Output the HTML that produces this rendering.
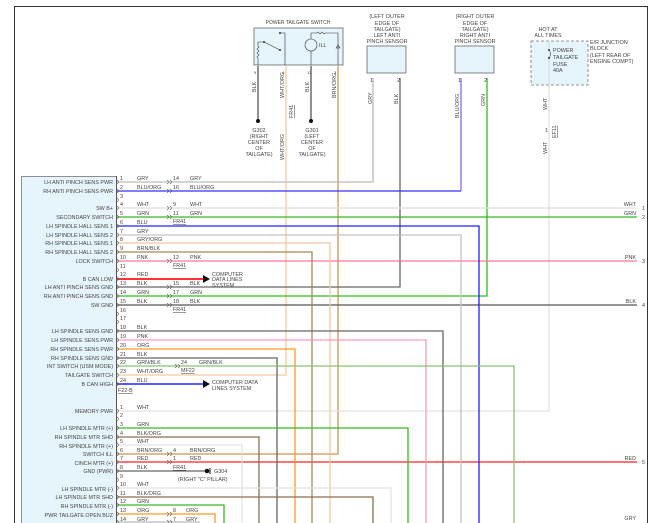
<!DOCTYPE html>
<html><head><meta charset="utf-8"><style>
html,body{margin:0;padding:0;background:#fff;width:650px;height:523px;overflow:hidden}
svg{display:block}
text{font-family:"Liberation Sans",sans-serif;font-size:5.4px;fill:#444}
.r{text-anchor:end}
.m{text-anchor:middle}
.u{text-decoration:underline}
</style></head><body>
<svg width="650" height="523" viewBox="0 0 650 523" xmlns="http://www.w3.org/2000/svg">
<!-- frame -->
<path d="M14.5 523V6.5H647.5V523" fill="none" stroke="#333" stroke-width="1"/>

<!-- vertical long wires -->
<g fill="none" stroke-width="1.3">
<!-- top switch wires -->
<path d="M258 66V120" stroke="#555"/>
<path d="M311 66V120" stroke="#555"/>
<path d="M286 66V375H117" stroke="#f2c9a0"/>
<path d="M338 66V454H117" stroke="#c89850"/>
<!-- sensors -->
<path d="M373 78V182H117" stroke="#bbb"/>
<path d="M400 78V287H117" stroke="#666"/>
<path d="M461 78V191" stroke="#8866ee"/>
<path d="M461 191H117" stroke="#3333ff"/>
<path d="M487 78V296H117" stroke="#33bb22"/>
<path d="M549 85V411H117" stroke="#e2e2e2"/>
<!-- right outputs -->
<path d="M117 208H637" stroke="#ddd"/>
<path d="M117 217H637" stroke="#33bb22"/>
<path d="M117 261H637" stroke="#ff7799"/>
<path d="M117 305H637" stroke="#555"/>
<path d="M117 462H637" stroke="#ff2222"/>
<!-- down to bottom -->
<path d="M117 226H479V523" stroke="#2222ff"/>
<path d="M117 235H461V523" stroke="#c4c4c4"/>
<path d="M117 243H330V523" stroke="#f0c8a0"/>
<path d="M117 252H312V523" stroke="#a08c58"/>
<path d="M117 331H443V523" stroke="#666"/>
<path d="M117 340H426V523" stroke="#ff99bb"/>
<path d="M117 349H295V523" stroke="#ff9922"/>
<path d="M117 358H277V523" stroke="#666"/>
<path d="M117 366H514V523" stroke="#88c070"/>
<path d="M117 428H408V523" stroke="#33bb22"/>
<path d="M117 437H259V523" stroke="#8b6f4e"/>
<path d="M117 445H242V523" stroke="#e2e2e2"/>
<path d="M117 488H391V523" stroke="#e2e2e2"/>
<path d="M117 497H373V523" stroke="#8b6f4e"/>
<path d="M117 505H224V523" stroke="#33bb22"/>
<path d="M117 514H215V523" stroke="#ff9922"/>
<path d="M117 522H200" stroke="#bbb"/>
<!-- arrows / ground -->
<path d="M117 279H205" stroke="#ff3333" stroke-width="2"/>
<path d="M117 384H205" stroke="#2222ff" stroke-width="1.5"/>
<path d="M117 471H205" stroke="#666"/>
</g>
<path d="M203 275L210 279L203 283Z" fill="#111"/>
<path d="M203 380L210 384L203 388Z" fill="#111"/>
<circle cx="207" cy="471" r="2.3" fill="#111"/><path d="M210 468V474" stroke="#111"/>

<!-- module box -->
<rect x="21.5" y="176.5" width="95" height="350" fill="#e6f4fb" stroke="#777" stroke-width="0.8"/>
<line x1="116.5" y1="176" x2="116.5" y2="523" stroke="#555" stroke-width="1"/>

<!-- C1 labels -->
<g>
<text class="r" x="113" y="184">LH ANTI PINCH SENS PWR</text><text x="120" y="180">1</text><text x="137" y="180">GRY</text>
<text class="r" x="113" y="193">RH ANTI PINCH SENS PWR</text><text x="120" y="189">2</text><text x="137" y="189">BLU/ORG</text>
<text x="120" y="198">3</text>
<text class="r" x="113" y="210">SW B+</text><text x="120" y="206">4</text><text x="137" y="206">WHT</text>
<text class="r" x="113" y="219">SECONDARY SWITCH</text><text x="120" y="215">5</text><text x="137" y="215">GRN</text>
<text class="r" x="113" y="228">LH SPINDLE HALL SENS 1</text><text x="120" y="224">6</text><text x="137" y="224">BLU</text>
<text class="r" x="113" y="237">LH SPINDLE HALL SENS 2</text><text x="120" y="233">7</text><text x="137" y="233">GRY</text>
<text class="r" x="113" y="245">RH SPINDLE HALL SENS 1</text><text x="120" y="241">8</text><text x="137" y="241">GRY/ORG</text>
<text class="r" x="113" y="254">RH SPINDLE HALL SENS 2</text><text x="120" y="250">9</text><text x="137" y="250">BRN/BLK</text>
<text class="r" x="113" y="263">LOCK SWITCH</text><text x="120" y="259">10</text><text x="137" y="259">PNK</text>
<text x="120" y="268">11</text>
<text class="r" x="113" y="281">B CAN LOW</text><text x="120" y="276">12</text><text x="137" y="276">RED</text>
<text class="r" x="113" y="289">LH ANTI PINCH SENS GND</text><text x="120" y="285">13</text><text x="137" y="285">BLK</text>
<text class="r" x="113" y="298">RH ANTI PINCH SENS GND</text><text x="120" y="294">14</text><text x="137" y="294">GRN</text>
<text class="r" x="113" y="307">SW GND</text><text x="120" y="303">15</text><text x="137" y="303">BLK</text>
<text x="120" y="312">16</text><text x="120" y="320">17</text>
<text class="r" x="113" y="333">LH SPINDLE SENS GND</text><text x="120" y="329">18</text><text x="137" y="329">BLK</text>
<text class="r" x="113" y="342">LH SPINDLE SENS PWR</text><text x="120" y="338">19</text><text x="137" y="338">PNK</text>
<text class="r" x="113" y="351">RH SPINDLE SENS PWR</text><text x="120" y="347">20</text><text x="137" y="347">ORG</text>
<text class="r" x="113" y="360">RH SPINDLE SENS GND</text><text x="120" y="356">21</text><text x="137" y="356">BLK</text>
<text class="r" x="113" y="368">INT SWITCH (USM MODE)</text><text x="120" y="364">22</text><text x="137" y="364">GRN/BLK</text>
<text class="r" x="113" y="377">TAILGATE SWITCH</text><text x="120" y="373">23</text><text x="137" y="373">WHT/ORG</text>
<text class="r" x="113" y="386">B CAN HIGH</text><text x="120" y="382">24</text><text x="137" y="382">BLU</text>
<text class="u" x="118" y="392">F22-B</text>
<!-- inline connectors -->
<text x="173" y="180">14</text><text x="190" y="180">GRY</text>
<text x="173" y="189">16</text><text x="190" y="189">BLU/ORG</text>
<text x="173" y="206">9</text><text x="190" y="206">WHT</text>
<text x="173" y="215">11</text><text x="190" y="215">GRN</text><text class="u" x="173" y="223">FR41</text>
<text x="173" y="259">12</text><text x="190" y="259">PNK</text><text class="u" x="173" y="267">FR41</text>
<text x="173" y="285">15</text><text x="190" y="285">BLK</text>
<text x="173" y="294">17</text><text x="190" y="294">GRN</text>
<text x="173" y="303">18</text><text x="190" y="303">BLK</text><text class="u" x="173" y="311">FR41</text>
<text x="181" y="364">24</text><text x="199" y="364">GRN/BLK</text><text class="u" x="181" y="372">MF22</text>
<text x="212" y="276">COMPUTER</text><text x="212" y="281">DATA LINES</text><text x="212" y="287">SYSTEM</text>
<text x="212" y="384">COMPUTER DATA</text><text x="212" y="390">LINES SYSTEM</text>
<!-- C2 -->
<text class="r" x="113" y="413">MEMORY PWR</text><text x="120" y="409">1</text><text x="137" y="409">WHT</text>
<text x="120" y="417">2</text>
<text class="r" x="113" y="430">LH SPINDLE MTR (+)</text><text x="120" y="426">3</text><text x="137" y="426">GRN</text>
<text class="r" x="113" y="439">RH SPINDLE MTR SHD</text><text x="120" y="435">4</text><text x="137" y="435">BLK/ORG</text>
<text class="r" x="113" y="448">RH SPINDLE MTR (+)</text><text x="120" y="443">5</text><text x="137" y="443">WHT</text>
<text class="r" x="113" y="456">SWITCH ILL</text><text x="120" y="452">6</text><text x="137" y="452">BRN/ORG</text>
<text class="r" x="113" y="465">CINCH MTR (+)</text><text x="120" y="460">7</text><text x="137" y="460">RED</text>
<text class="r" x="113" y="473">GND (PWR)</text><text x="120" y="469">8</text><text x="137" y="469">BLK</text>
<text x="120" y="478">9</text>
<text class="r" x="113" y="491">LH SPINDLE MTR (-)</text><text x="120" y="486">10</text><text x="137" y="486">WHT</text>
<text class="r" x="113" y="499">LH SPINDLE MTR SHD</text><text x="120" y="495">11</text><text x="137" y="495">BLK/ORG</text>
<text class="r" x="113" y="508">RH SPINDLE MTR (-)</text><text x="120" y="503">12</text><text x="137" y="503">GRN</text>
<text class="r" x="113" y="517">PWR TAILGATE OPEN BUZ</text><text x="120" y="512">13</text><text x="137" y="512">ORG</text>
<text x="120" y="521">14</text><text x="137" y="521">GRY</text>
<text x="173" y="452">4</text><text x="190" y="452">BRN/ORG</text>
<text x="173" y="460">1</text><text x="190" y="460">RED</text><text class="u" x="173" y="469">FR41</text>
<text x="173" y="512">8</text><text x="186" y="512">ORG</text>
<text x="173" y="521">7</text><text x="186" y="521">GRY</text>
<text x="214" y="473">G304</text><text x="178" y="481">(RIGHT "C" PILLAR)</text>
<!-- right labels -->
<text class="r" x="636" y="206">WHT</text><text x="642" y="210">1</text>
<text class="r" x="636" y="215">GRN</text><text x="642" y="219">2</text>
<text class="r" x="636" y="259">PNK</text><text x="642" y="263">3</text>
<text class="r" x="636" y="303">BLK</text><text x="642" y="307">4</text>
<text class="r" x="636" y="460">RED</text><text x="642" y="464">5</text>
<text class="r" x="636" y="520">GRY</text>
</g>
<!-- connector glyphs -->
<g fill="none" stroke="#555" stroke-width="0.6">
<path d="M117 180q3 2 0 4M117 189q3 2 0 4M117 198q3 2 0 4M117 206q3 2 0 4M117 215q3 2 0 4M117 224q3 2 0 4M117 233q3 2 0 4M117 241q3 2 0 4M117 250q3 2 0 4M117 259q3 2 0 4M117 268q3 2 0 4M117 277q3 2 0 4M117 285q3 2 0 4M117 294q3 2 0 4M117 303q3 2 0 4M117 312q3 2 0 4M117 320q3 2 0 4M117 329q3 2 0 4M117 338q3 2 0 4M117 347q3 2 0 4M117 356q3 2 0 4M117 364q3 2 0 4M117 373q3 2 0 4M117 382q3 2 0 4M117 409q3 2 0 4M117 417q3 2 0 4M117 426q3 2 0 4M117 435q3 2 0 4M117 443q3 2 0 4M117 452q3 2 0 4M117 460q3 2 0 4M117 469q3 2 0 4M117 478q3 2 0 4M117 486q3 2 0 4M117 495q3 2 0 4M117 503q3 2 0 4M117 512q3 2 0 4M117 520q3 2 0 4"/>
<path d="M167 180q3 2 0 4m3 -4q3 2 0 4M167 189q3 2 0 4m3 -4q3 2 0 4M167 206q3 2 0 4m3 -4q3 2 0 4M167 215q3 2 0 4m3 -4q3 2 0 4M167 259q3 2 0 4m3 -4q3 2 0 4M167 285q3 2 0 4m3 -4q3 2 0 4M167 294q3 2 0 4m3 -4q3 2 0 4M167 303q3 2 0 4m3 -4q3 2 0 4M175 364q3 2 0 4m3 -4q3 2 0 4M167 452q3 2 0 4m3 -4q3 2 0 4M167 460q3 2 0 4m3 -4q3 2 0 4M167 512q3 2 0 4m3 -4q3 2 0 4M167 520q3 2 0 4m3 -4q3 2 0 4"/>
</g>

<!-- power tailgate switch -->
<text class="m" x="298" y="24" style="font-size:5px">POWER TAILGATE SWITCH</text>
<rect x="254" y="28" width="89" height="37" fill="#e6f4fb" stroke="#666" stroke-width="0.8"/>
<g fill="none" stroke="#333" stroke-width="0.6">
<path d="M258 65V58q-2-1 0-2q2-1 0-2q-2-1 0-2q2-1 0-2q-2-1 0-2q2-1 0-2V42l6 0"/>
<path d="M264 42l16 8"/><path d="M280 33h5V65"/>
<circle cx="311" cy="45" r="6"/><path d="M311 33h6q1-2 2 0q1 2 2 0q1-2 2 0q1 2 2 0h13V65M311 33V39M311 51V65"/>
<path d="M336 48l2-3 2 3z"/>
</g>
<circle cx="264" cy="42" r="1" fill="#333"/><circle cx="280" cy="50" r="1" fill="#333"/><circle cx="280" cy="33" r="1" fill="#333"/>
<text x="319" y="47">ILL</text>
<text x="254" y="74" style="font-size:4px">9</text><text x="282" y="74" style="font-size:4px">4</text><text x="307" y="74" style="font-size:4px">12</text><text x="334" y="74" style="font-size:4px">3</text>
<g style="font-size:4.5px">
<text transform="translate(256,92) rotate(-90)">BLK</text>
<text transform="translate(284,98) rotate(-90)">WHT/ORG</text>
<text transform="translate(309,92) rotate(-90)">BLK</text>
<text transform="translate(336,98) rotate(-90)">BRN/ORG</text>
<text class="u" transform="translate(293,118) rotate(-90)">FR41</text>
<text transform="translate(284,160) rotate(-90)">WHT/ORG</text>
</g>
<circle cx="258" cy="121" r="2" fill="#111"/><circle cx="311" cy="121" r="2" fill="#111"/>
<text class="m" x="259" y="132">G302</text><text class="m" x="259" y="138">(RIGHT</text><text class="m" x="259" y="144">CENTER</text><text class="m" x="259" y="150">OF</text><text class="m" x="259" y="156">TAILGATE)</text>
<text class="m" x="312" y="132">G301</text><text class="m" x="312" y="138">(LEFT</text><text class="m" x="312" y="144">CENTER</text><text class="m" x="312" y="150">OF</text><text class="m" x="312" y="156">TAILGATE)</text>

<!-- sensors -->
<text class="m" x="387" y="18">(LEFT OUTER</text><text class="m" x="387" y="25">EDGE OF</text><text class="m" x="387" y="31">TAILGATE)</text><text class="m" x="387" y="37">LEFT ANTI</text><text class="m" x="387" y="43">PINCH SENSOR</text>
<rect x="367" y="46" width="39" height="27" fill="#e6f4fb" stroke="#666" stroke-width="0.8"/>
<text class="m" x="475" y="18">(RIGHT OUTER</text><text class="m" x="475" y="25">EDGE OF</text><text class="m" x="475" y="31">TAILGATE)</text><text class="m" x="475" y="37">RIGHT ANTI</text><text class="m" x="475" y="43">PINCH SENSOR</text>
<rect x="455" y="46" width="39" height="27" fill="#e6f4fb" stroke="#666" stroke-width="0.8"/>
<g style="font-size:4.5px">
<text x="370" y="82">1</text><text x="397" y="82">2</text><text x="458" y="82">1</text><text x="484" y="82">2</text>
<text transform="translate(372,104) rotate(-90)">GRY</text>
<text transform="translate(398,104) rotate(-90)">BLK</text>
<text transform="translate(459,118) rotate(-90)">BLU/ORG</text>
<text transform="translate(485,106) rotate(-90)">GRN</text>
<text transform="translate(547,110) rotate(-90)">WHT</text>
<text transform="translate(547,154) rotate(-90)">WHT</text>
<text x="545" y="132">1</text>
<text class="u" transform="translate(556,138) rotate(-90)">EF11</text>
</g>

<!-- fuse block -->
<text class="m" x="548" y="31">HOT AT</text><text class="m" x="548" y="37">ALL TIMES</text>
<rect x="531" y="41" width="57" height="44" fill="#e6f4fb" stroke="#777" stroke-width="0.8" stroke-dasharray="3,2"/>
<path d="M549 41V50M549 58V85" stroke="#ddd" stroke-width="1.3"/>
<path d="M549 50q3 4 0 8" fill="none" stroke="#333" stroke-width="0.6"/>
<circle cx="549" cy="50" r="1" fill="#333"/><circle cx="549" cy="58" r="1" fill="#333"/>
<text x="553" y="52">POWER</text><text x="553" y="59">TAILGATE</text><text x="553" y="66">FUSE</text><text x="553" y="72">40A</text>
<text x="590" y="44">E/R JUNCTION</text><text x="590" y="50">BLOCK</text><text x="590" y="57">(LEFT REAR OF</text><text x="590" y="63">ENGINE COMPT)</text>
</svg>
</body></html>
